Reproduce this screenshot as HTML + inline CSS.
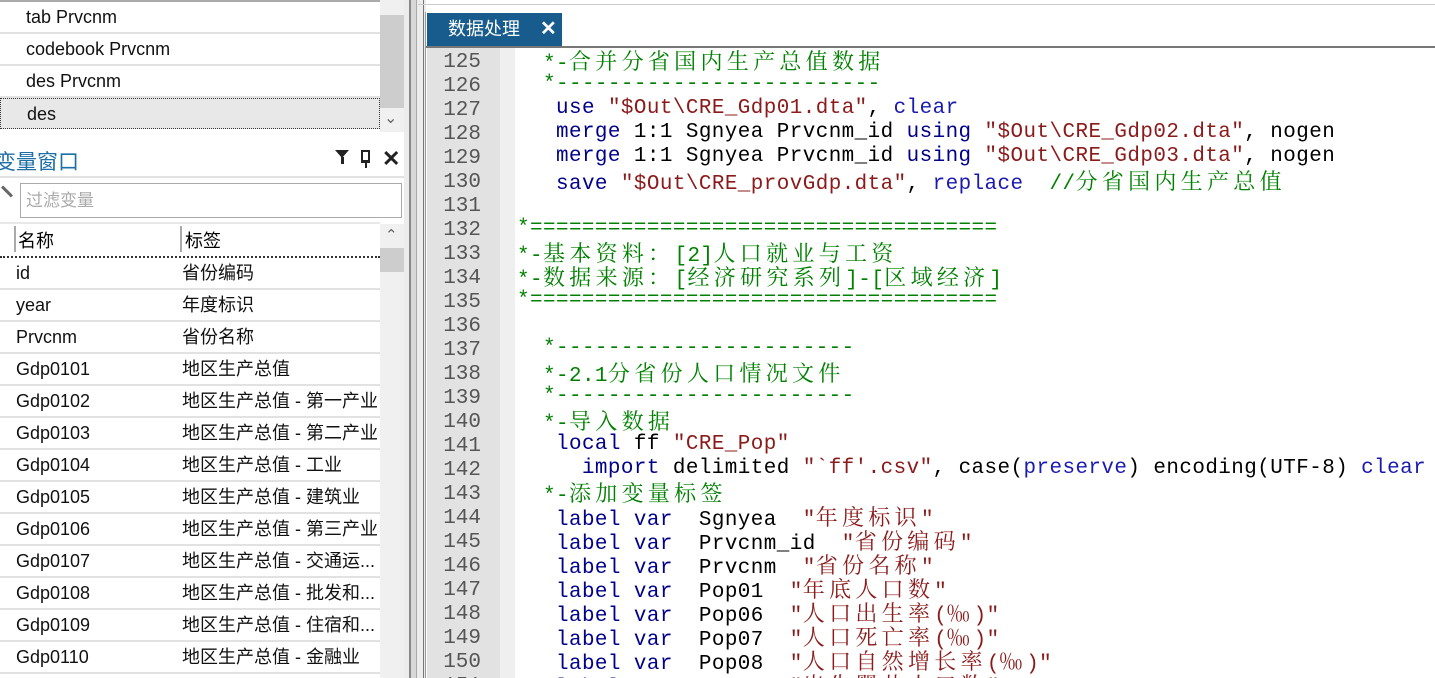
<!DOCTYPE html>
<html style="height:678px;overflow:hidden"><head><meta charset="utf-8"><style>
*{margin:0;padding:0;box-sizing:border-box}
body{width:1435px;height:678px;overflow:hidden;background:#fff;position:relative;font-family:"Liberation Sans","Noto Sans CJK SC",sans-serif}
.a{position:absolute}
.row{position:absolute;left:0;width:380px;height:32px;border-bottom:2px solid #e2e2e2;font-size:18px;color:#111;line-height:30px}
.code{position:absolute;left:517px;height:24px;line-height:24px;font-family:"Liberation Mono",monospace;font-size:20.9px;letter-spacing:0.45px;white-space:pre;color:#000}
.ln{position:absolute;left:427px;width:54px;text-align:right;height:24px;line-height:27px;font-family:"Liberation Mono",monospace;font-size:21px;color:#555}
.c{font-family:"Noto Serif CJK SC",serif;font-size:22px;letter-spacing:4.3px}
.g{color:#008000}.k{color:#00008b}.s{color:#8b1a1a}.b{color:#1a1ab0}
</style></head><body>
<div class="a" style="left:0;top:0;width:380px;height:2px;background:#aaa"></div>
<div class="row" style="top:2px;line-height:30px"><span style="margin-left:26px">tab Prvcnm</span></div>
<div class="row" style="top:34px"><span style="margin-left:26px">codebook Prvcnm</span></div>
<div class="row" style="top:66px"><span style="margin-left:26px">des Prvcnm</span></div>
<div class="row" style="top:98px;background:#e8e8e8;border:1px dotted #333;height:31px"><span style="margin-left:26px">des</span></div>
<div class="a" style="left:380px;top:0;width:24px;height:132px;background:#f0f0f0"></div>
<div class="a" style="left:380px;top:15px;width:24px;height:93px;background:#cdcdcd"></div>
<div class="a" style="left:384px;top:108px;font-size:16px;color:#666">⌄</div>
<div class="a" style="left:0;top:132px;width:404px;height:546px;background:#fff"></div>
<div class="a" style="left:-5px;top:146px;font-size:21px;color:#1e6fa8">变量窗口</div>
<div class="a" style="left:335px;top:150px;width:0;height:0;border-left:7px solid transparent;border-right:7px solid transparent;border-top:8px solid #222"></div>
<div class="a" style="left:341px;top:157px;width:3px;height:7px;background:#222"></div>
<div class="a" style="left:361px;top:150px;width:9px;height:13px;border:2px solid #222;border-bottom-width:3px"></div>
<div class="a" style="left:365px;top:163px;width:2px;height:5px;background:#222"></div>
<div class="a" style="left:382px;top:146px;font-size:22px;color:#222;font-weight:bold">✕</div>
<div class="a" style="left:0;top:176px;width:404px;height:2px;background:#e2e2e2"></div>
<div class="a" style="left:0;top:190px;width:14px;height:3px;background:#666;transform:rotate(45deg)"></div>
<div class="a" style="left:20px;top:183px;width:382px;height:35px;border:1px solid #aaa;font-size:17px;color:#aaa;line-height:33px;padding-left:5px">过滤变量</div>
<div class="a" style="left:0;top:222px;width:380px;height:2px;background:#e8e8e8"></div>
<div class="a" style="left:14px;top:226px;width:2px;height:26px;background:#aaa"></div>
<div class="a" style="left:180px;top:226px;width:2px;height:26px;background:#aaa"></div>
<div class="a" style="left:18px;top:227px;font-size:18px">名称</div>
<div class="a" style="left:185px;top:227px;font-size:18px">标签</div>
<div class="a" style="left:0;top:256px;width:380px;border-top:2px dotted #333"></div>
<div class="a" style="left:380px;top:224px;width:24px;height:454px;background:#f0f0f0"></div>
<div class="a" style="left:380px;top:248px;width:24px;height:24px;background:#cdcdcd"></div>
<div class="a" style="left:385px;top:226px;font-size:15px;color:#666">⌃</div>
<div id="vars"></div>
<div class="a" style="left:404px;top:0;width:22px;height:678px;background:#ececec"></div>
<div class="a" style="left:409px;top:0;width:2px;height:678px;background:#888"></div>
<div class="a" style="left:411px;top:0;width:5px;height:678px;background:#d8d8d8"></div>
<div class="a" style="left:416px;top:0;width:1px;height:678px;background:#aaa"></div>
<div class="a" style="left:423px;top:0;width:1px;height:678px;background:#777"></div>
<div class="a" style="left:425px;top:12px;width:1px;height:666px;background:#999"></div>
<div class="a" style="left:426px;top:0;width:1009px;height:46px;background:#fff"></div>
<div class="a" style="left:418px;top:4px;width:1017px;height:1px;background:#ccc"></div>
<div class="a" style="left:427px;top:13px;width:135px;height:33px;background:#175c8c;color:#fff;font-size:18px;line-height:33px;padding-left:21px">数据处理<span style="margin-left:20px;font-weight:bold;font-size:20px">✕</span></div>
<div class="a" style="left:426px;top:46px;width:1009px;height:2px;background:#777"></div>
<div class="a" style="left:427px;top:48px;width:73px;height:630px;background:#e2e2e2"></div>
<div class="a" style="left:500px;top:48px;width:15px;height:630px;background:#efefef"></div>
<div id="code"></div>
<script>
var vars=[["id","省份编码"],["year","年度标识"],["Prvcnm","省份名称"],["Gdp0101","地区生产总值"],["Gdp0102","地区生产总值 - 第一产业"],["Gdp0103","地区生产总值 - 第二产业"],["Gdp0104","地区生产总值 - 工业"],["Gdp0105","地区生产总值 - 建筑业"],["Gdp0106","地区生产总值 - 第三产业"],["Gdp0107","地区生产总值 - 交通运..."],["Gdp0108","地区生产总值 - 批发和..."],["Gdp0109","地区生产总值 - 住宿和..."],["Gdp0110","地区生产总值 - 金融业"]];
var h="";vars.forEach(function(v,i){var t=258+32*i;h+='<div class="row" style="top:'+t+'px;overflow:hidden;white-space:nowrap"><span class="a" style="left:16px">'+v[0]+'</span><span class="a" style="left:182px;width:198px;overflow:hidden">'+v[1]+'</span></div>';});
document.getElementById("vars").innerHTML=h;
function cj(s){return s.replace(/([\u3000-\u9fff\uff00-\uffef\u2030]+)/g,'<span class="c">$1</span>');}
var L=[
'  <g>*-合并分省国内生产总值数据</g>',
'  <g>*-------------------------</g>',
'   <k>use</k> <s>"$Out\\CRE_Gdp01.dta"</s>, <b>clear</b>',
'   <k>merge</k> 1:1 Sgnyea Prvcnm_id <k>using</k> <s>"$Out\\CRE_Gdp02.dta"</s>, nogen',
'   <k>merge</k> 1:1 Sgnyea Prvcnm_id <k>using</k> <s>"$Out\\CRE_Gdp03.dta"</s>, nogen',
'   <k>save</k> <s>"$Out\\CRE_provGdp.dta"</s>, <b>replace</b>  <g>//分省国内生产总值</g>',
'',
'<g>*====================================</g>',
'<g>*-基本资料：[2]人口就业与工资</g>',
'<g>*-数据来源：[经济研究系列]-[区域经济]</g>',
'<g>*====================================</g>',
'',
'  <g>*-----------------------</g>',
'  <g>*-2.1分省份人口情况文件</g>',
'  <g>*-----------------------</g>',
'  <g>*-导入数据</g>',
'   <k>local</k> ff <s>"CRE_Pop"</s>',
'     <k>import</k> delimited <s>"`ff\'.csv"</s>, case(<b>preserve</b>) encoding(UTF-8) <b>clear</b>',
'  <g>*-添加变量标签</g>',
'   <k>label</k> <k>var</k>  Sgnyea  <s>"年度标识"</s>',
'   <k>label</k> <k>var</k>  Prvcnm_id  <s>"省份编码"</s>',
'   <k>label</k> <k>var</k>  Prvcnm  <s>"省份名称"</s>',
'   <k>label</k> <k>var</k>  Pop01  <s>"年底人口数"</s>',
'   <k>label</k> <k>var</k>  Pop06  <s>"人口出生率(‰)"</s>',
'   <k>label</k> <k>var</k>  Pop07  <s>"人口死亡率(‰)"</s>',
'   <k>label</k> <k>var</k>  Pop08  <s>"人口自然增长率(‰)"</s>',
'   <k>label</k> <k>var</k>  Pop09  <s>"出生婴儿人口数"</s>'];
var c="";L.forEach(function(s,i){var t=49+24*i;s=s.replace(/<(\/?)([gksb])>/g,function(m,a,b){return a?'</span>':'<span class="'+b+'">';});
c+='<div class="ln" style="top:'+t+'px">'+(125+i)+'</div><div class="code" style="top:'+t+'px">'+cj(s)+'</div>';});
document.getElementById("code").innerHTML=c;
</script>
</body></html>
